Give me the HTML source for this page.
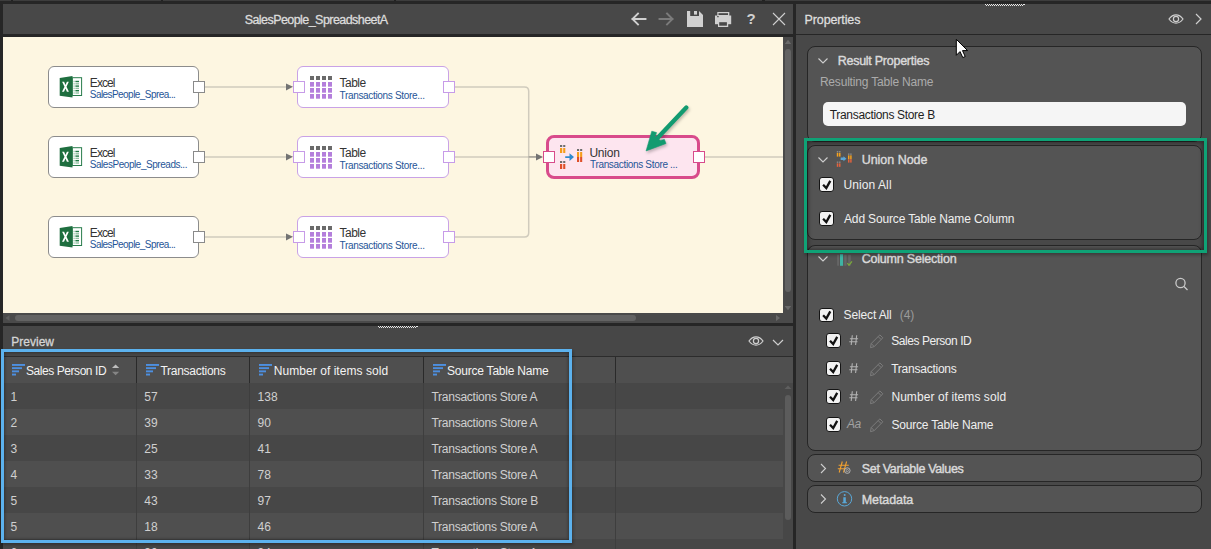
<!DOCTYPE html>
<html><head><meta charset="utf-8">
<style>
*{box-sizing:border-box;margin:0;padding:0}
html,body{width:1211px;height:549px;overflow:hidden;background:#262626;font-family:"Liberation Sans",sans-serif;position:relative}
.a{position:absolute}
.t{position:absolute;white-space:nowrap;line-height:1}
.b{font-weight:bold}
svg{position:absolute;overflow:visible}
.node{position:absolute;border-radius:6px;background:#fff}
.port{position:absolute;width:12px;height:12px;background:#fff;border:1px solid #8a8a8a}
.pp{border-color:#c79be8}
.nt{font-size:12px;color:#333}
.ns{font-size:10px;color:#1f5597}
.card{position:absolute;left:807px;width:395px;border:1.2px solid #262626;border-radius:8px;background:#545454}
.hd{font-size:12.5px;color:#dadada;-webkit-text-stroke:0.4px #dadada}
.sb{-webkit-text-stroke:0.3px currentColor}
.lb{font-size:12px;color:#efefef}
.cb{position:absolute;width:14.5px;height:14.5px;border-radius:3px;background:#f2f2f2;border:1.2px solid #151515;margin:-0.5px 0 0 -0.5px}
.cell{font-size:12px;color:#d0d0d0}
.th{font-size:12px;color:#f3f3f3}
</style></head><body>
<!-- top strip -->
<div class="a" style="left:0;top:0;width:1211px;height:1.3px;background:#3d3d3d"></div>
<div class="a" style="left:11px;top:0;width:2px;height:1.3px;background:#222"></div>
<div class="a" style="left:161px;top:0;width:2px;height:1.3px;background:#222"></div>
<div class="a" style="left:394px;top:0;width:2px;height:1.3px;background:#222"></div>
<div class="a" style="left:762px;top:0;width:3px;height:1.3px;background:#222"></div>

<!-- ============ LEFT HEADER ============ -->
<div class="a" style="left:3px;top:4px;width:790px;height:30px;background:#484848"></div>
<div class="t sb" style="left:244.7px;top:14.2px;font-size:12.5px;letter-spacing:-0.56px;color:#dcdcdc">SalesPeople_SpreadsheetA</div>
<svg style="left:0;top:0" width="1211" height="40">
  <g fill="none" stroke-width="1.6" stroke-linecap="square">
    <path d="M632.5 19H645.5M638 13.5L632.5 19L638 24.5" stroke="#d0d0d0" stroke-width="1.9"/>
    <path d="M659.5 19H672.5M667 13.5L672.5 19L667 24.5" stroke="#7b7b7b" stroke-width="1.9"/>
  </g>
  <!-- save -->
  <path d="M687 11H690.2V16H699V11L703 15V27H687Z" fill="#d0d0d0"/>
  <rect x="694" y="11" width="3" height="3.6" fill="#d0d0d0"/>
  <!-- print -->
  <rect x="717.3" y="12" width="12" height="4" fill="#d0d0d0"/>
  <rect x="718.5" y="13.2" width="9.5" height="1.8" fill="#484848"/>
  <rect x="715" y="15.5" width="16.2" height="8.7" fill="#d0d0d0"/>
  <rect x="717" y="16.2" width="1.8" height="1" fill="#484848"/>
  <rect x="718" y="21" width="10.2" height="6" fill="#d0d0d0"/>
  <rect x="719.2" y="22.2" width="7.7" height="3.5" fill="#484848"/>
  <!-- close -->
  <path d="M773 13L785 25M785 13L773 25" stroke="#d0d0d0" stroke-width="1.1"/>
</svg>
<div class="t b" style="left:746.6px;top:10.6px;font-size:15px;color:#d0d0d0">?</div>

<!-- ============ CANVAS ============ -->
<div class="a" style="left:3px;top:37px;width:780px;height:276px;background:#fdf6e1;overflow:hidden">
</div>
<svg style="left:0;top:0" width="790" height="320">
  <g fill="none" stroke="#d0cbbd" stroke-width="1.5">
    <path d="M204.5 86.9H287M204.5 156.9H287M204.5 236.9H287"/>
    <path d="M454.5 86.9H524.5Q528.7 86.9 528.7 91.1V232.7Q528.7 236.9 524.5 236.9H454.5"/>
    <path d="M454.5 156.9H537"/>
    <path d="M704.5 157H783"/>
  </g>
  <path d="M528.5 156.9H537" stroke="#a3a099" stroke-width="1.5"/>
  <g fill="#737373">
    <path d="M286 83.4L293 86.8L286 90.4Z"/>
    <path d="M286 153.4L293 156.8L286 160.4Z"/>
    <path d="M286 233.4L293 236.8L286 240.4Z"/>
    <path d="M536 153.5L543 157L536 160.5Z"/>
  </g>
</svg>

<!-- Excel nodes -->
<div class="node" style="left:48px;top:66px;width:151px;height:42px;border:1px solid #8c8c8c"></div>
<div class="node" style="left:48px;top:136px;width:151px;height:42px;border:1px solid #8c8c8c"></div>
<div class="node" style="left:48px;top:216px;width:151px;height:42px;border:1px solid #8c8c8c"></div>
<!-- Table nodes -->
<div class="node" style="left:297px;top:66px;width:152px;height:42px;border:1px solid #c9a2e6"></div>
<div class="node" style="left:297px;top:136px;width:152px;height:42px;border:1px solid #c9a2e6"></div>
<div class="node" style="left:297px;top:216px;width:152px;height:42px;border:1px solid #c9a2e6"></div>
<!-- Union node -->
<div class="node" style="left:546px;top:135px;width:154px;height:44px;border:3px solid #d84b8b;border-radius:8px;background:#fde5ef"></div>

<!-- ports -->
<div class="port" style="left:192.5px;top:81px"></div>
<div class="port" style="left:192.5px;top:151px"></div>
<div class="port" style="left:192.5px;top:231px"></div>
<div class="port pp" style="left:292.5px;top:81px"></div>
<div class="port pp" style="left:292.5px;top:151px"></div>
<div class="port pp" style="left:292.5px;top:231px"></div>
<div class="port pp" style="left:442.5px;top:81px"></div>
<div class="port pp" style="left:442.5px;top:151px"></div>
<div class="port pp" style="left:442.5px;top:231px"></div>
<div class="port" style="left:542.5px;top:151px;border-color:#d84b8b"></div>
<div class="port" style="left:692.5px;top:151px;border-color:#d84b8b"></div>

<!-- node icons -->
<svg style="left:0;top:0" width="790" height="320">
  <defs>
    <g id="xl">
      <path d="M13 0.6V22L0.2 20.3V2.4Z" fill="#1e6e3f"/>
      <rect x="12.9" y="2.2" width="9.2" height="17.8" fill="#fff" stroke="#2a7d4c" stroke-width="1"/>
      <rect x="13.8" y="5.3" width="1.7" height="1.4" fill="#b8d8c2"/><rect x="15.9" y="5.3" width="3.6" height="1.4" fill="#217a45"/><rect x="13.8" y="7.6" width="1.7" height="1.4" fill="#b8d8c2"/><rect x="15.9" y="7.6" width="3.6" height="1.4" fill="#8fc2a0"/><rect x="13.8" y="9.9" width="1.7" height="1.4" fill="#b8d8c2"/><rect x="15.9" y="9.9" width="3.6" height="1.4" fill="#217a45"/><rect x="13.8" y="12.2" width="1.7" height="1.4" fill="#b8d8c2"/><rect x="15.9" y="12.2" width="3.6" height="1.4" fill="#8fc2a0"/><rect x="13.8" y="14.5" width="1.7" height="1.4" fill="#b8d8c2"/><rect x="15.9" y="14.5" width="3.6" height="1.4" fill="#217a45"/><rect x="13.8" y="16.8" width="1.7" height="1.4" fill="#b8d8c2"/><rect x="15.9" y="16.8" width="3.6" height="1.4" fill="#8fc2a0"/>
      <path d="M2.6 6.3H4.6L6.0 9.4L7.4 6.3H9.3L7.0 11.2L9.4 16.2H7.4L6.0 13.0L4.5 16.2H2.5L5.0 11.2Z" fill="#fff"/>
    </g>
    <g id="tb">
      <g fill="#6a6a6a"><rect x="0" y="0" width="4" height="4"/><rect x="6" y="0" width="4" height="4"/><rect x="12" y="0" width="4" height="4"/><rect x="18" y="0" width="4" height="4"/></g>
      <g fill="#b47fdc">
        <rect x="0" y="6" width="4" height="4.7"/><rect x="6" y="6" width="4" height="4.7"/><rect x="12" y="6" width="4" height="4.7"/><rect x="18" y="6" width="4" height="4.7"/>
        <rect x="0" y="12" width="4" height="4.7"/><rect x="6" y="12" width="4" height="4.7"/><rect x="12" y="12" width="4" height="4.7"/><rect x="18" y="12" width="4" height="4.7"/>
        <rect x="0" y="18" width="4" height="4.7"/><rect x="6" y="18" width="4" height="4.7"/><rect x="12" y="18" width="4" height="4.7"/><rect x="18" y="18" width="4" height="4.7"/>
      </g>
    </g>
    <g id="un">
      <g fill="#6e6e6e"><rect x="0" y="0" width="2.2" height="2"/><rect x="3.2" y="0" width="2.1" height="2"/>
        <rect x="0" y="16" width="2.2" height="2"/><rect x="3.2" y="16" width="2.1" height="2"/>
        <rect x="17" y="4" width="2.1" height="2"/><rect x="20.1" y="4" width="2.1" height="2"/></g>
      <g fill="#f59c1a"><rect x="0" y="3" width="2.2" height="5"/><rect x="3.2" y="3" width="2.1" height="5"/>
        <rect x="17" y="7" width="2.1" height="5"/><rect x="20.1" y="7" width="2.1" height="5"/></g>
      <g fill="#df4f2a"><rect x="0" y="19" width="2.2" height="5"/><rect x="3.2" y="19" width="2.1" height="5"/>
        <rect x="17" y="12" width="2.1" height="5"/><rect x="20.1" y="12" width="2.1" height="5"/></g>
      <path d="M5.2 11.2H9.5V8.2L14 12L9.5 15.9V12.9H5.2Z" fill="#2e8ad0"/>
    </g>
  </defs>
  <use href="#xl" x="59.5" y="75.5"/>
  <use href="#xl" x="59.5" y="145.5"/>
  <use href="#xl" x="59.5" y="225.5"/>
  <use href="#tb" x="310" y="76"/>
  <use href="#tb" x="310" y="146"/>
  <use href="#tb" x="310" y="226"/>
  <use href="#un" x="560" y="145"/>
  <!-- green arrow -->
  <g fill="#129b70" stroke="#129b70" stroke-linejoin="round" style="filter:drop-shadow(1px 2px 1.5px rgba(0,0,0,0.25))">
    <path d="M686.3 107.6L657.5 138" stroke-width="4.3" stroke-linecap="round" fill="none"/>
    <path d="M646.1 150.9L651.8 131.2L656.5 132.6L655.1 136.7L660.3 140.5L664.4 139.4L666 143.5Z" stroke-width="0.6"/>
  </g>
</svg>

<!-- node texts -->
<div class="t nt" style="left:89.8px;top:76.6px;font-size:12px;letter-spacing:-0.9px">Excel</div>
<div class="t ns" style="left:89.8px;top:90.4px;letter-spacing:-0.56px">SalesPeople_Sprea...</div>
<div class="t nt" style="left:89.8px;top:146.6px;font-size:12px;letter-spacing:-0.9px">Excel</div>
<div class="t ns" style="left:89.8px;top:160.4px;letter-spacing:-0.46px">SalesPeople_Spreads...</div>
<div class="t nt" style="left:89.8px;top:226.6px;font-size:12px;letter-spacing:-0.9px">Excel</div>
<div class="t ns" style="left:89.8px;top:240.4px;letter-spacing:-0.56px">SalesPeople_Sprea...</div>
<div class="t nt" style="left:339.5px;top:76.6px;font-size:12px;letter-spacing:-0.5px">Table</div>
<div class="t ns" style="left:339.5px;top:90.5px;letter-spacing:-0.32px">Transactions Store...</div>
<div class="t nt" style="left:339.5px;top:146.6px;font-size:12px;letter-spacing:-0.5px">Table</div>
<div class="t ns" style="left:339.5px;top:160.5px;letter-spacing:-0.32px">Transactions Store...</div>
<div class="t nt" style="left:339.5px;top:226.6px;font-size:12px;letter-spacing:-0.5px">Table</div>
<div class="t ns" style="left:339.5px;top:240.5px;letter-spacing:-0.32px">Transactions Store...</div>
<div class="t nt" style="left:589.4px;top:147px;font-size:12px;letter-spacing:-0.2px">Union</div>
<div class="t ns" style="left:590px;top:160.2px;letter-spacing:-0.33px">Transactions Store ...</div>

<!-- v scrollbar -->
<div class="a" style="left:783px;top:37px;width:10px;height:276px;background:#4a4a4a"></div>
<div class="a" style="left:785px;top:48.7px;width:6px;height:243px;border-radius:3px;background:#636363"></div>
<svg style="left:0;top:0" width="800" height="330">
  <path d="M784.8 44L788 39.8L791.2 44Z" fill="#6a6a6a"/>
  <path d="M784.6 306L788 310.2L791.2 306Z" fill="#6a6a6a"/>
  <path d="M9.5 315L5.5 318L9.5 321Z" fill="#5e5e5e"/>
  <path d="M776 315L780 318L776 321Z" fill="#6a6a6a"/>
</svg>
<!-- h scrollbar -->
<div class="a" style="left:3px;top:313px;width:790px;height:10px;background:#4a4a4a"></div>
<div class="a" style="left:15px;top:315px;width:621px;height:6px;border-radius:3px;background:#636363"></div>
<svg style="left:0;top:0" width="800" height="330">
  <path d="M9.5 315L5.5 318L9.5 321Z" fill="#5e5e5e"/>
  <path d="M776 315L780 318L776 321Z" fill="#6a6a6a"/>
</svg>

<!-- ============ PREVIEW ============ -->
<div class="a" style="left:3px;top:326px;width:790px;height:30px;background:#474747"></div>
<div class="t sb" style="left:11.3px;top:335.8px;font-size:12px;color:#d4d4d4;letter-spacing:0px">Preview</div>
<svg style="left:0;top:0" width="800" height="360">
  <g fill="none" stroke="#cfcfcf" stroke-width="1.2">
    <path d="M749 341C753 335.5 759 335.5 763 341C759 346.5 753 346.5 749 341Z"/>
    <circle cx="756" cy="341" r="2.6"/>
    <path d="M773 340L778 345L783 340"/>
  </g>
</svg>
<!-- table -->
<div class="a" style="left:3px;top:357px;width:790px;height:26px;background:#4f4f4f"></div>
<div class="a" style="left:3px;top:383px;width:780px;height:26px;background:#474747"></div>
<div class="a" style="left:3px;top:409px;width:780px;height:26px;background:#4f4f4f"></div>
<div class="a" style="left:3px;top:435px;width:780px;height:26px;background:#474747"></div>
<div class="a" style="left:3px;top:461px;width:780px;height:26px;background:#4f4f4f"></div>
<div class="a" style="left:3px;top:487px;width:780px;height:26px;background:#474747"></div>
<div class="a" style="left:3px;top:513px;width:780px;height:26px;background:#4f4f4f"></div>
<div class="a" style="left:3px;top:539px;width:780px;height:10px;background:#474747"></div>
<div class="a" style="left:3px;top:356px;width:790px;height:1px;background:#2c2c2c"></div>
<!-- column separators -->
<div class="a" style="left:136px;top:357px;width:1px;height:26px;background:#2a2a2a"></div>
<div class="a" style="left:249px;top:357px;width:1px;height:26px;background:#2a2a2a"></div>
<div class="a" style="left:423px;top:357px;width:1px;height:26px;background:#2a2a2a"></div>
<div class="a" style="left:615px;top:357px;width:1px;height:26px;background:#2a2a2a"></div>
<div class="a" style="left:136px;top:383px;width:1px;height:166px;background:#3e3e3e"></div>
<div class="a" style="left:249px;top:383px;width:1px;height:166px;background:#3e3e3e"></div>
<div class="a" style="left:423px;top:383px;width:1px;height:166px;background:#3e3e3e"></div>
<div class="a" style="left:615px;top:383px;width:1px;height:166px;background:#3e3e3e"></div>
<!-- header icons -->
<svg style="left:0;top:0" width="800" height="549">
  <defs>
    <g id="fi" fill="#4d8fe0">
      <rect x="0" y="0" width="13" height="1.9"/><rect x="0" y="3.2" width="10" height="1.9"/>
      <rect x="0" y="6.4" width="7" height="1.9"/><rect x="0" y="9.6" width="4" height="1.9"/>
    </g>
  </defs>
  <use href="#fi" x="12" y="364"/>
  <use href="#fi" x="146" y="364"/>
  <use href="#fi" x="259" y="364"/>
  <use href="#fi" x="433" y="364"/>
  <path d="M112 368.1L115.6 364.6L119.2 368.1Z" fill="#bdbdbd"/>
  <path d="M112 371.8L115.6 375.2L119.2 371.8Z" fill="#858585"/>
</svg>
<div class="t th" style="left:26px;top:364.6px;letter-spacing:-0.44px">Sales Person ID</div>
<div class="t th" style="left:160.5px;top:364.6px;letter-spacing:-0.28px">Transactions</div>
<div class="t th" style="left:273.8px;top:364.6px;letter-spacing:0.05px">Number of items sold</div>
<div class="t th" style="left:447px;top:364.6px;letter-spacing:-0.22px">Source Table Name</div>

<div class="t cell" style="left:10.5px;top:391.4px">1</div>
<div class="t cell" style="left:144.3px;top:391.4px">57</div>
<div class="t cell" style="left:257.6px;top:391.4px">138</div>
<div class="t cell" style="left:431.5px;top:391.4px;letter-spacing:-0.26px">Transactions Store A</div>
<div class="t cell" style="left:10.5px;top:417.4px">2</div>
<div class="t cell" style="left:144.3px;top:417.4px">39</div>
<div class="t cell" style="left:257.6px;top:417.4px">90</div>
<div class="t cell" style="left:431.5px;top:417.4px;letter-spacing:-0.26px">Transactions Store A</div>
<div class="t cell" style="left:10.5px;top:443.4px">3</div>
<div class="t cell" style="left:144.3px;top:443.4px">25</div>
<div class="t cell" style="left:257.6px;top:443.4px">41</div>
<div class="t cell" style="left:431.5px;top:443.4px;letter-spacing:-0.26px">Transactions Store A</div>
<div class="t cell" style="left:10.5px;top:469.4px">4</div>
<div class="t cell" style="left:144.3px;top:469.4px">33</div>
<div class="t cell" style="left:257.6px;top:469.4px">78</div>
<div class="t cell" style="left:431.5px;top:469.4px;letter-spacing:-0.26px">Transactions Store A</div>
<div class="t cell" style="left:10.5px;top:495.4px">5</div>
<div class="t cell" style="left:144.3px;top:495.4px">43</div>
<div class="t cell" style="left:257.6px;top:495.4px">97</div>
<div class="t cell" style="left:431.5px;top:495.4px;letter-spacing:-0.26px">Transactions Store B</div>
<div class="t cell" style="left:10.5px;top:521.4px">5</div>
<div class="t cell" style="left:144.3px;top:521.4px">18</div>
<div class="t cell" style="left:257.6px;top:521.4px">46</div>
<div class="t cell" style="left:431.5px;top:521.4px;letter-spacing:-0.26px">Transactions Store A</div>
<div class="t cell" style="left:10.5px;top:547.4px">6</div>
<div class="t cell" style="left:144.3px;top:547.4px">30</div>
<div class="t cell" style="left:257.6px;top:547.4px">94</div>
<div class="t cell" style="left:431.5px;top:547.4px;letter-spacing:-0.26px">Transactions Store A</div>
<!-- table v scrollbar -->
<div class="a" style="left:783px;top:383px;width:10px;height:166px;background:#474747"></div>
<div class="a" style="left:785px;top:395px;width:5.5px;height:125px;border-radius:3px;background:#5c5c5c"></div>
<svg style="left:0;top:0" width="800" height="549">
  <path d="M784.5 389L788 385.5L791.5 389Z" fill="#5e5e5e"/>
</svg>
<!-- blue highlight -->
<div class="a" style="left:1px;top:349px;width:571px;height:194px;border:3px solid #5cb2ee;box-shadow:inset 0 0 3px 1px rgba(0,0,0,0.3),1px 2px 3px rgba(0,0,0,0.3)"></div>

<!-- ============ RIGHT PANEL ============ -->
<div class="a" style="left:796px;top:4px;width:415px;height:30px;background:#484848"></div>
<div class="a" style="left:796px;top:35px;width:415px;height:514px;background:#484848"></div>
<div class="t sb" style="left:804.6px;top:14.2px;font-size:12.5px;letter-spacing:-0.13px;color:#dedede">Properties</div>
<svg style="left:0;top:0" width="1211" height="40">
  <g fill="none" stroke="#cfcfcf" stroke-width="1.2">
    <path d="M1169 19C1173 13.5 1179 13.5 1183 19C1179 24.5 1173 24.5 1169 19Z"/>
    <circle cx="1176" cy="19" r="2.6"/>
    <path d="M1196 14L1201 19L1196 24"/>
  </g>
</svg>

<!-- card 1: Result Properties -->
<div class="card" style="top:46px;height:96px"></div>
<svg style="left:0;top:0" width="1211" height="549">
  <g fill="none" stroke="#cfcfcf" stroke-width="1.1">
    <path d="M818.5 58.5L823 63L827.5 58.5"/>
  </g>
</svg>
<div class="t hd" style="left:837.7px;top:54.6px;letter-spacing:-0.26px">Result Properties</div>
<div class="t" style="left:819.9px;top:75.8px;font-size:12px;color:#ababab;letter-spacing:-0.19px">Resulting Table Name</div>
<div class="a" style="left:823px;top:101.7px;width:363px;height:24px;border-radius:5px;background:#f5f5f5"></div>
<div class="t" style="left:829.8px;top:109.2px;font-size:12px;color:#1e1e1e;letter-spacing:-0.33px">Transactions Store B</div>

<!-- card 2: Union Node -->
<div class="card" style="top:144.9px;height:95.6px"></div>
<svg style="left:0;top:0" width="1211" height="549">
  <g fill="none" stroke="#cfcfcf" stroke-width="1.1">
    <path d="M818.5 157.5L823 162L827.5 157.5"/>
  </g>
</svg>
<div class="t hd" style="left:861.7px;top:153.8px;letter-spacing:-0.03px">Union Node</div>
<div class="cb" style="left:819.7px;top:177.5px"></div>
<div class="t lb" style="left:843.4px;top:178.8px;letter-spacing:0.1px">Union All</div>
<div class="cb" style="left:819.7px;top:211.5px"></div>
<div class="t lb" style="left:844px;top:212.8px;letter-spacing:-0.15px">Add Source Table Name Column</div>

<!-- card 3: Column Selection -->
<div class="card" style="top:244.8px;height:206.6px"></div>
<svg style="left:0;top:0" width="1211" height="549">
  <g fill="none" stroke="#cfcfcf" stroke-width="1.1">
    <path d="M818.5 256.5L823 261L827.5 256.5"/>
  </g>
  <g fill="none" stroke="#cacaca" stroke-width="1.3">
    <circle cx="1180.5" cy="283" r="4.6"/>
    <path d="M1184 286.5L1187.5 290"/>
  </g>
</svg>
<div class="t hd" style="left:861.7px;top:253.2px;letter-spacing:-0.2px">Column Selection</div>
<div class="cb" style="left:819.7px;top:308px"></div>
<div class="t lb" style="left:843.5px;top:309.1px;letter-spacing:-0.12px">Select All</div>
<div class="t" style="left:899.7px;top:309.1px;font-size:12px;color:#9a9a9a">(4)</div>

<div class="cb" style="left:826.6px;top:333.5px"></div>
<div class="t lb" style="left:891.2px;top:334.8px;letter-spacing:-0.44px">Sales Person ID</div>
<div class="cb" style="left:826.6px;top:361.5px"></div>
<div class="t lb" style="left:891.2px;top:362.8px;letter-spacing:-0.24px">Transactions</div>
<div class="cb" style="left:826.6px;top:389.5px"></div>
<div class="t lb" style="left:891.4px;top:390.8px;letter-spacing:0.07px">Number of items sold</div>
<div class="cb" style="left:826.6px;top:417.5px"></div>
<div class="t lb" style="left:891.4px;top:418.8px;letter-spacing:-0.2px">Source Table Name</div>

<!-- card 4 / 5 -->
<div class="card" style="top:453.6px;height:28.8px"></div>
<div class="t hd" style="left:861.8px;top:463.2px;letter-spacing:-0.33px">Set Variable Values</div>
<div class="card" style="top:484.6px;height:28.4px"></div>
<div class="t hd" style="left:861.8px;top:494px;letter-spacing:-0.09px">Metadata</div>
<svg style="left:0;top:0" width="1211" height="549">
  <g fill="none" stroke="#cfcfcf" stroke-width="1.1">
    <path d="M821 464L825.5 468.5L821 473"/>
    <path d="M821 494.5L825.5 499L821 503.5"/>
  </g>
</svg>


<!-- right panel icons -->
<svg style="left:0;top:0" width="1211" height="549">
  <defs>
    <path id="ck" d="M3.4 7.3L6.6 10.6L10.6 3.4" fill="none" stroke="#111" stroke-width="2.3"/>
    <g id="pn" fill="none" stroke="#7c7c7c" stroke-width="1" stroke-linejoin="round">
      <path d="M0.5 12.5L1.2 8.3L9.9 -0.3L12.8 2.6L4.2 11.4Z"/><path d="M8.2 1.4L11.1 4.3M1.2 8.3L4.2 11.4"/>
    </g>
    <g id="hs" fill="none" stroke="#b2b2b2" stroke-width="1.1">
      <path d="M3.3 0L2.2 9.8M7.7 0L6.6 9.8M0.9 3.5H9.1M0.3 6.5H8.5"/>
    </g>
  </defs>
  <use href="#ck" x="819.7" y="177.5"/>
  <use href="#ck" x="819.7" y="211.5"/>
  <use href="#ck" x="819.7" y="308"/>
  <use href="#ck" x="826.6" y="333.5"/>
  <use href="#ck" x="826.6" y="361.5"/>
  <use href="#ck" x="826.6" y="389.5"/>
  <use href="#ck" x="826.6" y="417.5"/>
  <use href="#pn" x="870" y="335.2"/><use href="#hs" x="849" y="335.2"/>
  <use href="#pn" x="870" y="363.2"/><use href="#hs" x="849" y="363.2"/>
  <use href="#pn" x="870" y="391.2"/><use href="#hs" x="849" y="391.2"/>
  <use href="#pn" x="870" y="419.2"/>
  <!-- union node icon small -->
  <g transform="translate(836.8 151) scale(0.7)">
    <g fill="#8a8a8a"><rect x="0" y="0" width="2.2" height="2"/><rect x="3.2" y="0" width="2.1" height="2"/>
      <rect x="0" y="15" width="2.2" height="2"/><rect x="3.2" y="15" width="2.1" height="2"/>
      <rect x="16" y="3.5" width="2.1" height="2"/><rect x="19.1" y="3.5" width="2.1" height="2"/></g>
    <g fill="#f5a21e"><rect x="0" y="2.6" width="2.2" height="5.4"/><rect x="3.2" y="2.6" width="2.1" height="5.4"/>
      <rect x="16" y="6.2" width="2.1" height="5.6"/><rect x="19.1" y="6.2" width="2.1" height="5.6"/></g>
    <g fill="#e3623e"><rect x="0" y="17.6" width="2.2" height="5"/><rect x="3.2" y="17.6" width="2.1" height="5"/>
      <rect x="16" y="11.8" width="2.1" height="4.8"/><rect x="19.1" y="11.8" width="2.1" height="4.8"/></g>
    <path d="M5.5 9.4H9.5V7.6L13.8 11L9.5 14.8V13H5.5Z" fill="#5aa6d8"/>
  </g>
  <!-- column selection icon -->
  <g>
    <rect x="837.1" y="254.7" width="1.9" height="11" fill="#656565"/>
    <rect x="840" y="254.2" width="3.1" height="11.6" fill="#3fb3a3"/>
    <rect x="844.2" y="254.7" width="2.4" height="11" fill="#656565"/>
    <rect x="848.2" y="254.7" width="2.6" height="11" fill="#656565"/>
    <path d="M847.3 263.2L849 265.2L852 261.3" fill="none" stroke="#7aaa3a" stroke-width="1.2"/>
  </g>
  <!-- set variable icon -->
  <g fill="none" stroke="#f0a030" stroke-width="1.1">
    <path d="M842.3 461.5L839.2 472.5M846.6 461.5L843.5 472.5M838.6 465.2H848.8M837.8 468.8H844"/>
  </g>
  <circle cx="847.3" cy="470.6" r="2.8" fill="none" stroke="#bdbdbd" stroke-width="0.9"/>
  <circle cx="847.3" cy="470.6" r="1.1" fill="none" stroke="#bdbdbd" stroke-width="0.7"/>
  <!-- info icon -->
  <circle cx="844.5" cy="498.8" r="7.2" fill="none" stroke="#5aa8d8" stroke-width="1"/>
  <circle cx="844.7" cy="495" r="1" fill="#5aa8d8"/>
  <path d="M843.3 497.2H845.8V502.3H847V503.2H842.2V502.3H843.3Z" fill="#5aa8d8"/>
  <!-- cursor -->
  <path d="M956.3 39.3V55.3L960 51.6L962.8 57.6L965.2 56.5L962.5 50.6H967.6Z" fill="#fff" stroke="#000" stroke-width="1" stroke-linejoin="miter"/>
</svg>
<div class="t" style="left:847px;top:418px;font-size:12px;color:#a2a2a2;font-style:italic;letter-spacing:-0.5px">Aa</div>

<svg style="left:0;top:0" width="1211" height="340" shape-rendering="crispEdges"><g fill="#e8e8e8"><rect x="985" y="4" width="1" height="1"/><rect x="986" y="5" width="1" height="1"/><rect x="987" y="4" width="1" height="1"/><rect x="988" y="5" width="1" height="1"/><rect x="989" y="4" width="1" height="1"/><rect x="990" y="5" width="1" height="1"/><rect x="991" y="4" width="1" height="1"/><rect x="992" y="5" width="1" height="1"/><rect x="993" y="4" width="1" height="1"/><rect x="994" y="5" width="1" height="1"/><rect x="995" y="4" width="1" height="1"/><rect x="996" y="5" width="1" height="1"/><rect x="997" y="4" width="1" height="1"/><rect x="998" y="5" width="1" height="1"/><rect x="999" y="4" width="1" height="1"/><rect x="1000" y="5" width="1" height="1"/><rect x="1001" y="4" width="1" height="1"/><rect x="1002" y="5" width="1" height="1"/><rect x="1003" y="4" width="1" height="1"/><rect x="1004" y="5" width="1" height="1"/><rect x="1005" y="4" width="1" height="1"/><rect x="1006" y="5" width="1" height="1"/><rect x="1007" y="4" width="1" height="1"/><rect x="1008" y="5" width="1" height="1"/><rect x="1009" y="4" width="1" height="1"/><rect x="1010" y="5" width="1" height="1"/><rect x="1011" y="4" width="1" height="1"/><rect x="1012" y="5" width="1" height="1"/><rect x="1013" y="4" width="1" height="1"/><rect x="1014" y="5" width="1" height="1"/><rect x="1015" y="4" width="1" height="1"/><rect x="1016" y="5" width="1" height="1"/><rect x="1017" y="4" width="1" height="1"/><rect x="1018" y="5" width="1" height="1"/><rect x="1019" y="4" width="1" height="1"/><rect x="1020" y="5" width="1" height="1"/><rect x="1021" y="4" width="1" height="1"/><rect x="1022" y="5" width="1" height="1"/><rect x="1023" y="4" width="2" height="1"/><rect x="378" y="326" width="1" height="1"/><rect x="379" y="327" width="1" height="1"/><rect x="380" y="326" width="1" height="1"/><rect x="381" y="327" width="1" height="1"/><rect x="382" y="326" width="1" height="1"/><rect x="383" y="327" width="1" height="1"/><rect x="384" y="326" width="1" height="1"/><rect x="385" y="327" width="1" height="1"/><rect x="386" y="326" width="1" height="1"/><rect x="387" y="327" width="1" height="1"/><rect x="388" y="326" width="1" height="1"/><rect x="389" y="327" width="1" height="1"/><rect x="390" y="326" width="1" height="1"/><rect x="391" y="327" width="1" height="1"/><rect x="392" y="326" width="1" height="1"/><rect x="393" y="327" width="1" height="1"/><rect x="394" y="326" width="1" height="1"/><rect x="395" y="327" width="1" height="1"/><rect x="396" y="326" width="1" height="1"/><rect x="397" y="327" width="1" height="1"/><rect x="398" y="326" width="1" height="1"/><rect x="399" y="327" width="1" height="1"/><rect x="400" y="326" width="1" height="1"/><rect x="401" y="327" width="1" height="1"/><rect x="402" y="326" width="1" height="1"/><rect x="403" y="327" width="1" height="1"/><rect x="404" y="326" width="1" height="1"/><rect x="405" y="327" width="1" height="1"/><rect x="406" y="326" width="1" height="1"/><rect x="407" y="327" width="1" height="1"/><rect x="408" y="326" width="1" height="1"/><rect x="409" y="327" width="1" height="1"/><rect x="410" y="326" width="1" height="1"/><rect x="411" y="327" width="1" height="1"/><rect x="412" y="326" width="1" height="1"/><rect x="413" y="327" width="1" height="1"/><rect x="414" y="326" width="1" height="1"/><rect x="415" y="327" width="1" height="1"/><rect x="416" y="326" width="2" height="1"/></g></svg>
<!-- green highlight -->
<div class="a" style="left:804px;top:138px;width:403px;height:115px;border:3px solid #0fa276;box-shadow:inset 0 0 4px 1px rgba(0,0,0,0.45),1px 2px 3px rgba(0,0,0,0.3)"></div>

</body></html>
